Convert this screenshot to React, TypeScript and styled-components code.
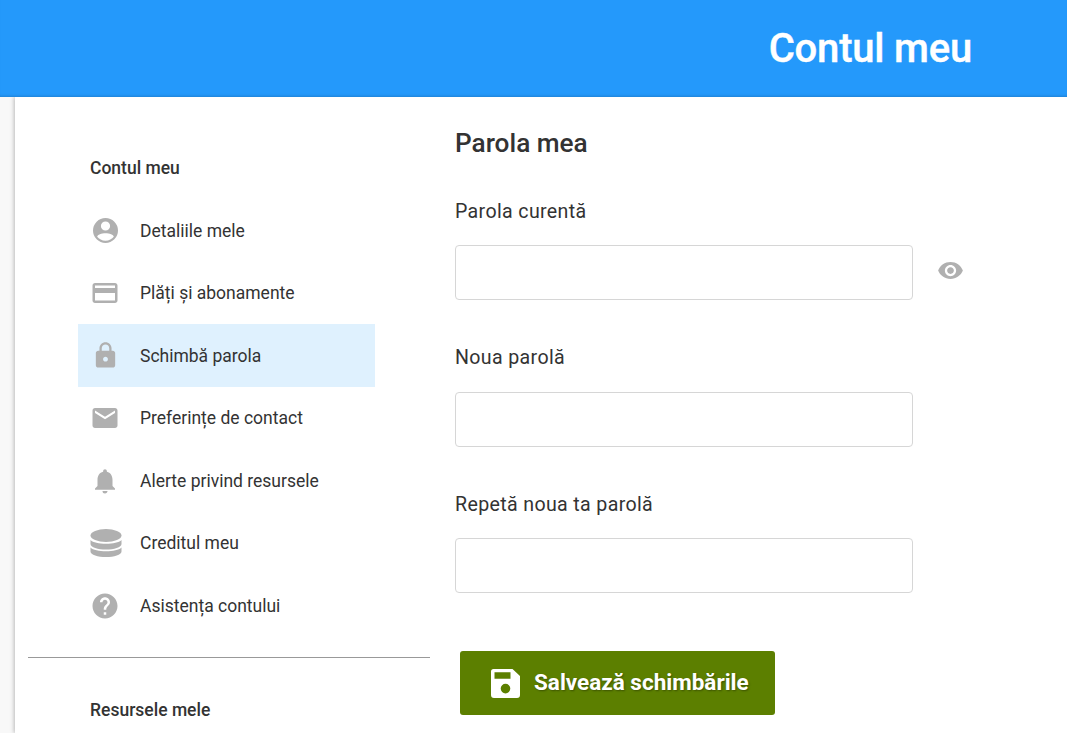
import React from "react";
import styled, { createGlobalStyle } from "styled-components";
import { MdCreditCard, MdLock, MdEmail, MdNotifications, MdHelp, MdRemoveRedEye } from "react-icons/md";

const Global = createGlobalStyle`
  html, body { margin: 0; padding: 0; height: 100%; overflow: hidden; background: #fff; }
  body { font-family: Roboto, "Liberation Sans", sans-serif; color: #333; }
`;

const Page = styled.div`
  height: 733px;
  overflow: hidden;
  display: flex;
  flex-direction: column;
  background: #f8f8f8;
`;

const Header = styled.header`
  flex: none;
  height: 97px;
  background: #2499fb;
  box-shadow: inset 0 -3px 3px -2px rgba(0, 0, 0, 0.16);
  display: flex;
  align-items: center;
  justify-content: flex-end;
  padding-right: 95px;
  position: relative;
  z-index: 2;
`;

const HeaderTitle = styled.h1`
  margin: 0;
  font-size: 40px;
  font-weight: 500;
  color: #fff;
  letter-spacing: -0.2px;
  -webkit-text-stroke: 0.4px #fff;
`;

const Body = styled.div`
  flex: 1;
  margin-left: 15px;
  display: flex;
  background: #fff;
  box-shadow: -1px 0 4px rgba(0, 0, 0, 0.25);
`;

const Sidebar = styled.nav`
  flex: none;
  width: 415px;
  margin-left: 13px;
  padding-top: 61px;
  box-sizing: border-box;
`;

const SectionTitle = styled.h2`
  margin: 0 0 0 62px;
  height: 20px;
  line-height: 20px;
  font-size: 17.5px;
  font-weight: 500;
  color: #333;
`;

const Menu = styled.div`
  margin: 21.3px 0 0 50px;
  width: 297px;
`;

const Row = styled.div<{ $active?: boolean }>`
  height: 62.5px;
  display: flex;
  align-items: center;
  background: ${(p) => (p.$active ? "#dff1fe" : "transparent")};
  font-size: 17.5px;
  color: #333;
`;

const IconBox = styled.span`
  flex: none;
  width: 32px;
  margin: 0 19px 0 11px;
  display: flex;
  justify-content: center;
  color: #b0b0b0;
`;

const Divider = styled.hr`
  margin: 20px 0 0;
  width: 402px;
  border: 0;
  border-top: 1px solid #999;
`;

const SecondTitle = styled(SectionTitle)`
  margin-top: 42.5px;
`;

const Main = styled.main`
  flex: none;
  margin-left: 12px;
  padding-top: 30px;
  width: 530px;
`;

const Title = styled.h2`
  margin: 0;
  height: 32px;
  line-height: 32px;
  font-size: 26.2px;
  font-weight: 500;
  color: #333;
`;

const Label = styled.label`
  display: block;
  height: 24px;
  line-height: 24px;
  margin-top: 46px;
  font-size: 19.6px;
  letter-spacing: 0.35px;
  color: #333;
`;

const FirstLabel = styled(Label)`
  margin-top: 40.5px;
`;

const FieldRow = styled.div`
  margin-top: 21.5px;
  display: flex;
  align-items: center;
  gap: 24px;
`;

const Input = styled.input`
  width: 458px;
  height: 55px;
  box-sizing: border-box;
  border: 1px solid #d6d6d6;
  border-radius: 4px;
  background: #fff;
`;

const Eye = styled.span`
  display: flex;
  margin-bottom: 4px;
  color: #b0b0b0;
`;

const SaveButton = styled.button`
  margin: 58px 0 0 5px;
  width: 315px;
  height: 64px;
  padding: 0 0 0 31px;
  border: 0;
  border-radius: 3px;
  background: #5c7f00;
  color: #fff;
  display: flex;
  align-items: center;
  gap: 14px;
  font-family: inherit;
  font-size: 22.5px;
  font-weight: 700;
  text-shadow: 1px 1px 2px rgba(0, 0, 0, 0.35);
`;

const ButtonText = styled.span`
  margin-bottom: 2px;
`;

const CoinsSvg = styled.svg`
  transform: translateX(1px);
`;

const AccountIcon = () => (
  <svg width="25" height="25" viewBox="0 0 25 25" fill="currentColor">
    <path
      fillRule="evenodd"
      d="M12.500 0a12.500 12.500 0 1 0 0 25a12.500 12.500 0 0 0 0-25zm0 3.400a4.600 4.600 0 1 1 0 9.200a4.600 4.600 0 0 1 0-9.200zm0 11.900c4 0 8 1.300 8.300 3.500c-1.800 2.400-4.800 3.900-8.300 3.900s-6.500-1.500-8.300-3.900c.3-2.200 4.300-3.500 8.300-3.500z"
    />
  </svg>
);

const CoinsIcon = () => (
  <CoinsSvg width="32" height="28" viewBox="0 0 32 28" fill="currentColor">
    <ellipse cx="16" cy="6.500" rx="15.500" ry="6.500" />
    <path d="M.5 11C3 13.500 9 14.700 16 14.700S29 13.500 31.500 11V15C31.500 18.500 24 20.500 16 20.500S.5 18.500.5 15z" />
    <path d="M.5 18.500C3 21 9 22.200 16 22.200S29 21 31.500 18.500V22.500C31.500 26 24 28 16 28S.5 26 .5 22.500z" />
  </CoinsSvg>
);

const SaveIcon = () => (
  <svg width="29" height="29" viewBox="0 0 29 29" fill="currentColor">
    <path
      fillRule="evenodd"
      d="M2.500 0H21.500L29 7V26a3 3 0 0 1-3 3H3a3 3 0 0 1-3-3V2.500A2.500 2.500 0 0 1 2.500 0zM3.500 3.200V9.800H19.500V3.200zM14.500 14.800a4.800 4.800 0 1 0 0 9.600a4.800 4.800 0 0 0 0-9.600z"
    />
  </svg>
);

const items = [
  { label: "Detaliile mele", icon: <AccountIcon /> },
  { label: "Plăți și abonamente", icon: <MdCreditCard size={30} /> },
  { label: "Schimbă parola", icon: <MdLock size={29} />, active: true },
  { label: "Preferințe de contact", icon: <MdEmail size={30} /> },
  { label: "Alerte privind resursele", icon: <MdNotifications size={30} /> },
  { label: "Creditul meu", icon: <CoinsIcon /> },
  { label: "Asistența contului", icon: <MdHelp size={30} /> },
];

export default function App() {
  return (
    <Page>
      <Global />
      <Header>
        <HeaderTitle>Contul meu</HeaderTitle>
      </Header>
      <Body>
        <Sidebar>
          <SectionTitle>Contul meu</SectionTitle>
          <Menu>
            {items.map((it) => (
              <Row key={it.label} $active={it.active}>
                <IconBox>{it.icon}</IconBox>
                {it.label}
              </Row>
            ))}
          </Menu>
          <Divider />
          <SecondTitle>Resursele mele</SecondTitle>
        </Sidebar>
        <Main>
          <Title>Parola mea</Title>
          <FirstLabel>Parola curentă</FirstLabel>
          <FieldRow>
            <Input type="password" />
            <Eye>
              <MdRemoveRedEye size={27} />
            </Eye>
          </FieldRow>
          <Label>Noua parolă</Label>
          <FieldRow>
            <Input type="password" />
          </FieldRow>
          <Label>Repetă noua ta parolă</Label>
          <FieldRow>
            <Input type="password" />
          </FieldRow>
          <SaveButton>
            <SaveIcon />
            <ButtonText>Salvează schimbările</ButtonText>
          </SaveButton>
        </Main>
      </Body>
    </Page>
  );
}
